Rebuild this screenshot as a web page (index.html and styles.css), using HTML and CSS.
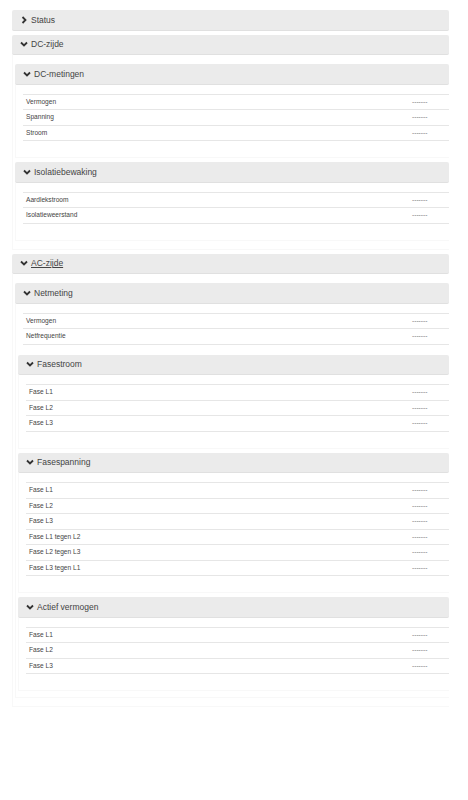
FILE: index.html
```html
<!DOCTYPE html>
<html lang="nl">
<head>
    <meta charset="UTF-8">
    <meta name="viewport" content="width=device-width, initial-scale=1.0">
    <title>Metingen</title>
    <link rel="stylesheet" href="styles.css">
</head>
<body>

<!-- Status (ingeklapt) -->
<div class="panel">
    <div class="panel-heading">
        <svg class="chevron" viewBox="0 0 8 8"><polyline points="2.5,1 5.5,4 2.5,7"/></svg>
        <span>Status</span>
    </div>
</div>

<!-- DC-zijde -->
<div class="panel">
    <div class="panel-heading">
        <svg class="chevron" viewBox="0 0 8 8"><polyline points="1,2.5 4,5.5 7,2.5"/></svg>
        <span>DC-zijde</span>
    </div>
    <div class="panel-body">

        <div class="panel">
            <div class="panel-heading">
                <svg class="chevron" viewBox="0 0 8 8"><polyline points="1,2.5 4,5.5 7,2.5"/></svg>
                <span>DC-metingen</span>
            </div>
            <div class="panel-body">
                <table class="meting-table">
                    <tr><td>Vermogen</td><td class="value">-------</td></tr>
                    <tr><td>Spanning</td><td class="value">-------</td></tr>
                    <tr><td>Stroom</td><td class="value">-------</td></tr>
                </table>
            </div>
        </div>

        <div class="panel">
            <div class="panel-heading">
                <svg class="chevron" viewBox="0 0 8 8"><polyline points="1,2.5 4,5.5 7,2.5"/></svg>
                <span>Isolatiebewaking</span>
            </div>
            <div class="panel-body">
                <table class="meting-table">
                    <tr><td>Aardlekstroom</td><td class="value">-------</td></tr>
                    <tr><td>Isolatieweerstand</td><td class="value">-------</td></tr>
                </table>
            </div>
        </div>

    </div>
</div>

<!-- AC-zijde -->
<div class="panel">
    <div class="panel-heading">
        <svg class="chevron" viewBox="0 0 8 8"><polyline points="1,2.5 4,5.5 7,2.5"/></svg>
        <a href="#" class="heading-link">AC-zijde</a>
    </div>
    <div class="panel-body">

        <div class="panel">
            <div class="panel-heading">
                <svg class="chevron" viewBox="0 0 8 8"><polyline points="1,2.5 4,5.5 7,2.5"/></svg>
                <span>Netmeting</span>
            </div>
            <div class="panel-body">
                <table class="meting-table">
                    <tr><td>Vermogen</td><td class="value">-------</td></tr>
                    <tr><td>Netfrequentie</td><td class="value">-------</td></tr>
                </table>

                <div class="panel">
                    <div class="panel-heading">
                        <svg class="chevron" viewBox="0 0 8 8"><polyline points="1,2.5 4,5.5 7,2.5"/></svg>
                        <span>Fasestroom</span>
                    </div>
                    <div class="panel-body">
                        <table class="meting-table">
                            <tr><td>Fase L1</td><td class="value">-------</td></tr>
                            <tr><td>Fase L2</td><td class="value">-------</td></tr>
                            <tr><td>Fase L3</td><td class="value">-------</td></tr>
                        </table>
                    </div>
                </div>

                <div class="panel">
                    <div class="panel-heading">
                        <svg class="chevron" viewBox="0 0 8 8"><polyline points="1,2.5 4,5.5 7,2.5"/></svg>
                        <span>Fasespanning</span>
                    </div>
                    <div class="panel-body">
                        <table class="meting-table">
                            <tr><td>Fase L1</td><td class="value">-------</td></tr>
                            <tr><td>Fase L2</td><td class="value">-------</td></tr>
                            <tr><td>Fase L3</td><td class="value">-------</td></tr>
                            <tr><td>Fase L1 tegen L2</td><td class="value">-------</td></tr>
                            <tr><td>Fase L2 tegen L3</td><td class="value">-------</td></tr>
                            <tr><td>Fase L3 tegen L1</td><td class="value">-------</td></tr>
                        </table>
                    </div>
                </div>

                <div class="panel">
                    <div class="panel-heading">
                        <svg class="chevron" viewBox="0 0 8 8"><polyline points="1,2.5 4,5.5 7,2.5"/></svg>
                        <span>Actief vermogen</span>
                    </div>
                    <div class="panel-body">
                        <table class="meting-table">
                            <tr><td>Fase L1</td><td class="value">-------</td></tr>
                            <tr><td>Fase L2</td><td class="value">-------</td></tr>
                            <tr><td>Fase L3</td><td class="value">-------</td></tr>
                        </table>
                    </div>
                </div>

            </div>
        </div>

    </div>
</div>

</body>
</html>
```

FILE: styles.css
```css
/* Basis */
body {
    font-family: "Liberation Sans", Arial, sans-serif;
    color: #444;
    background-color: #fff;
    margin: 0;
    padding: 10px 19px 0 12px;
}

/* Panelen */
.panel {
    margin-bottom: 4px;
}

.panel-body > .panel:last-child {
    margin-bottom: 0;
}

.panel-heading {
    display: flex;
    align-items: center;
    height: 19.5px;
    padding-left: 8px;
    background-color: #ebebeb;
    border-bottom: 1px solid #e0e0e0;
    border-radius: 2px;
    font-size: 8.5px;
}

.chevron {
    width: 8px;
    height: 8px;
    margin-right: 3px;
    fill: none;
    stroke: #333;
    stroke-width: 1.8;
}

.heading-link {
    color: #444;
    text-decoration: underline;
}

.panel-body {
    padding: 9px 0 8px 2px;
    border-left: 1px solid #f8f8f8;
    border-bottom: 1px solid #f8f8f8;
}

/* geneste panelen sluiten strakker af */
.panel-body .panel-body {
    padding-bottom: 6px;
}

/* Tabellen met metingen */
.meting-table {
    width: calc(100% - 5px);
    margin: 0 0 10px 5px;
    border-collapse: collapse;
    border-bottom: 1px solid #e6e6e6;
    font-size: 6.6px;
}

.meting-table td {
    border-top: 1px solid #e6e6e6;
    padding: 3px 3px;
    height: 8.5px;
    line-height: 8.5px;
    box-sizing: content-box;
}

.meting-table td.value {
    width: 34px;
    color: #777;
}
```
